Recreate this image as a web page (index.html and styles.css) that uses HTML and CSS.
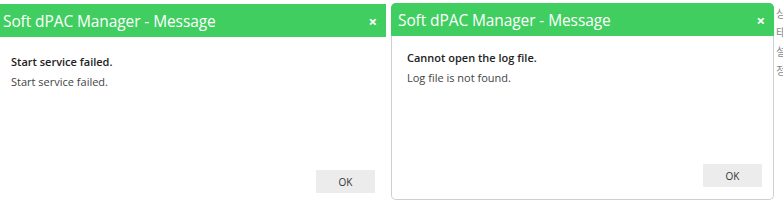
FILE: index.html
```html
<!DOCTYPE html>
<html lang="en">
<head>
  <meta charset="UTF-8" />
  <title>Soft dPAC Manager - Message</title>
  <link rel="stylesheet" href="styles.css">
</head>
<body>

  <div class="desk">
    <!-- first message -->
    <div class="dialog dialog-left">
      <div class="dialog-head">
        <span class="dialog-title">Soft dPAC Manager - Message</span>
        <span class="dialog-close">&times;</span>
      </div>
      <div class="dialog-body">
        <p class="msg-title">Start service failed.</p>
        <p class="msg-text">Start service failed.</p>
      </div>
      <div class="dialog-foot">
        <button class="ok-btn">OK</button>
      </div>
    </div>

    <!-- second message -->
    <div class="dialog dialog-right">
      <div class="dialog-head">
        <span class="dialog-title">Soft dPAC Manager - Message</span>
        <span class="dialog-close">&times;</span>
      </div>
      <div class="dialog-body">
        <p class="msg-title">Cannot open the log file.</p>
        <p class="msg-text">Log file is not found.</p>
      </div>
      <div class="dialog-foot">
        <button class="ok-btn">OK</button>
      </div>
    </div>

    <div class="behind">
      <span>상</span>
      <span>태</span>
      <span>설</span>
      <span>정</span>
    </div>
  </div>

</body>
</html>
```

FILE: styles.css
```css
:root {
  --green: #3fce5f;
  --border: #cfcfcf;
}

body {
  margin: 0;
  background: #fff;
  font-family: "Open Sans", "Noto Sans CJK KR", sans-serif;
  overflow: hidden;
}

.desk {
  display: flex;
  align-items: flex-start;
  height: 209px;
}

.dialog {
  display: flex;
  flex-direction: column;
  background: #fff;
  flex-shrink: 0;
}

.dialog-left {
  width: 390px;
  height: 205px;
  margin-left: -4px;
  margin-top: 4px;
}

.dialog-right {
  width: 381px;
  height: 196px;
  margin-left: 5px;
  margin-top: 3px;
  border: 1px solid var(--border);
  border-top: none;
  border-radius: 5px;
}

.dialog-head {
  display: flex;
  align-items: center;
  justify-content: space-between;
  height: 33px;
  padding: 0 9px 0 7px;
  background: var(--green);
  color: #fff;
}

.dialog-right .dialog-head {
  border-radius: 5px 5px 0 0;
  margin: 0 -1px;
}

.dialog-title {
  font-size: 15.5px;
  letter-spacing: -0.1px;
}

.dialog-close {
  font-size: 15px;
  font-weight: bold;
}

.dialog-body {
  flex: 1;
  padding: 15px 15px 0;
}

.dialog-right .dialog-body {
  padding-top: 12px;
}

.msg-title, .msg-text {
  margin: 0;
  font-size: 11px;
  line-height: 20px;
}

.msg-title {
  font-weight: 600;
  color: #222;
}

.msg-text {
  color: #444;
}

.dialog-foot {
  display: flex;
  justify-content: flex-end;
  padding: 0 11px 12px;
}

.dialog-left .dialog-foot {
  padding-bottom: 16px;
}

.ok-btn {
  width: 59px;
  height: 23px;
  border: none;
  background: #ececec;
  color: #333;
  font-family: inherit;
  font-size: 10px;
}

.behind {
  display: flex;
  flex-direction: column;
  width: 9px;
  margin-top: 4px;
  padding-left: 2px;
  overflow: hidden;
  color: #888;
  font-size: 11px;
  line-height: 19px;
  white-space: nowrap;
}
```
